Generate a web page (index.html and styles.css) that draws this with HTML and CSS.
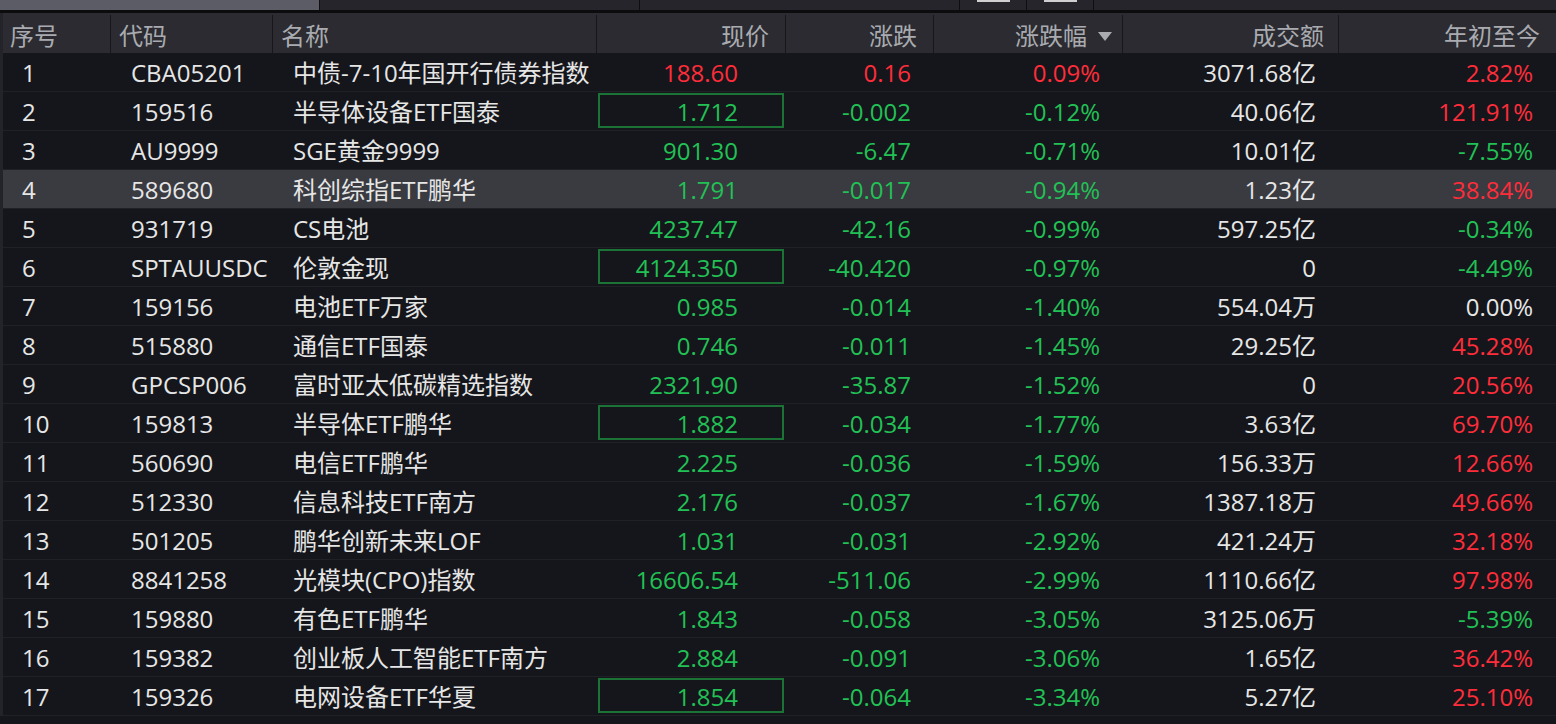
FILE: index.html
```html
<!DOCTYPE html>
<html lang="zh-CN">
<head>
<meta charset="utf-8">
<title>行情列表</title>
<link rel="stylesheet" href="styles.css">
</head>
<body>
<div class="tabbar">
  <div class="tab tab-active"></div>
  <div class="tab tab-w320"></div>
  <div class="tab tab-w320"></div>
  <div class="tab tab-icon"><span class="icon-bar"></span></div>
  <div class="tab tab-icon"><span class="icon-bar"></span></div>
  <div class="tab tab-rest"></div>
</div>
<div class="band"></div>
<div class="table">
  <div class="row head">
    <div class="c c1">序号</div>
    <div class="c c2">代码</div>
    <div class="c c3">名称</div>
    <div class="c c4">现价</div>
    <div class="c c5">涨跌</div>
    <div class="c c6">涨跌幅<span class="sort"></span></div>
    <div class="c c7">成交额</div>
    <div class="c c8">年初至今</div>
  </div>

  <div class="row"><div class="c c1">1</div><div class="c c2">CBA05201</div><div class="c c3">中债-7-10年国开行债券指数</div><div class="c c4 up">188.60</div><div class="c c5 up">0.16</div><div class="c c6 up">0.09%</div><div class="c c7">3071.68亿</div><div class="c c8 up">2.82%</div></div>
  <div class="row"><div class="c c1">2</div><div class="c c2">159516</div><div class="c c3">半导体设备ETF国泰</div><div class="c c4 dn boxed">1.712</div><div class="c c5 dn">-0.002</div><div class="c c6 dn">-0.12%</div><div class="c c7">40.06亿</div><div class="c c8 up">121.91%</div></div>
  <div class="row"><div class="c c1">3</div><div class="c c2">AU9999</div><div class="c c3">SGE黄金9999</div><div class="c c4 dn">901.30</div><div class="c c5 dn">-6.47</div><div class="c c6 dn">-0.71%</div><div class="c c7">10.01亿</div><div class="c c8 dn">-7.55%</div></div>
  <div class="row selected"><div class="c c1">4</div><div class="c c2">589680</div><div class="c c3">科创综指ETF鹏华</div><div class="c c4 dn">1.791</div><div class="c c5 dn">-0.017</div><div class="c c6 dn">-0.94%</div><div class="c c7">1.23亿</div><div class="c c8 up">38.84%</div></div>
  <div class="row"><div class="c c1">5</div><div class="c c2">931719</div><div class="c c3">CS电池</div><div class="c c4 dn">4237.47</div><div class="c c5 dn">-42.16</div><div class="c c6 dn">-0.99%</div><div class="c c7">597.25亿</div><div class="c c8 dn">-0.34%</div></div>
  <div class="row"><div class="c c1">6</div><div class="c c2">SPTAUUSDC</div><div class="c c3">伦敦金现</div><div class="c c4 dn boxed">4124.350</div><div class="c c5 dn">-40.420</div><div class="c c6 dn">-0.97%</div><div class="c c7">0</div><div class="c c8 dn">-4.49%</div></div>
  <div class="row"><div class="c c1">7</div><div class="c c2">159156</div><div class="c c3">电池ETF万家</div><div class="c c4 dn">0.985</div><div class="c c5 dn">-0.014</div><div class="c c6 dn">-1.40%</div><div class="c c7">554.04万</div><div class="c c8">0.00%</div></div>
  <div class="row"><div class="c c1">8</div><div class="c c2">515880</div><div class="c c3">通信ETF国泰</div><div class="c c4 dn">0.746</div><div class="c c5 dn">-0.011</div><div class="c c6 dn">-1.45%</div><div class="c c7">29.25亿</div><div class="c c8 up">45.28%</div></div>
  <div class="row"><div class="c c1">9</div><div class="c c2">GPCSP006</div><div class="c c3">富时亚太低碳精选指数</div><div class="c c4 dn">2321.90</div><div class="c c5 dn">-35.87</div><div class="c c6 dn">-1.52%</div><div class="c c7">0</div><div class="c c8 up">20.56%</div></div>
  <div class="row"><div class="c c1">10</div><div class="c c2">159813</div><div class="c c3">半导体ETF鹏华</div><div class="c c4 dn boxed">1.882</div><div class="c c5 dn">-0.034</div><div class="c c6 dn">-1.77%</div><div class="c c7">3.63亿</div><div class="c c8 up">69.70%</div></div>
  <div class="row"><div class="c c1">11</div><div class="c c2">560690</div><div class="c c3">电信ETF鹏华</div><div class="c c4 dn">2.225</div><div class="c c5 dn">-0.036</div><div class="c c6 dn">-1.59%</div><div class="c c7">156.33万</div><div class="c c8 up">12.66%</div></div>
  <div class="row"><div class="c c1">12</div><div class="c c2">512330</div><div class="c c3">信息科技ETF南方</div><div class="c c4 dn">2.176</div><div class="c c5 dn">-0.037</div><div class="c c6 dn">-1.67%</div><div class="c c7">1387.18万</div><div class="c c8 up">49.66%</div></div>
  <div class="row"><div class="c c1">13</div><div class="c c2">501205</div><div class="c c3">鹏华创新未来LOF</div><div class="c c4 dn">1.031</div><div class="c c5 dn">-0.031</div><div class="c c6 dn">-2.92%</div><div class="c c7">421.24万</div><div class="c c8 up">32.18%</div></div>
  <div class="row"><div class="c c1">14</div><div class="c c2">8841258</div><div class="c c3">光模块(CPO)指数</div><div class="c c4 dn">16606.54</div><div class="c c5 dn">-511.06</div><div class="c c6 dn">-2.99%</div><div class="c c7">1110.66亿</div><div class="c c8 up">97.98%</div></div>
  <div class="row"><div class="c c1">15</div><div class="c c2">159880</div><div class="c c3">有色ETF鹏华</div><div class="c c4 dn">1.843</div><div class="c c5 dn">-0.058</div><div class="c c6 dn">-3.05%</div><div class="c c7">3125.06万</div><div class="c c8 dn">-5.39%</div></div>
  <div class="row"><div class="c c1">16</div><div class="c c2">159382</div><div class="c c3">创业板人工智能ETF南方</div><div class="c c4 dn">2.884</div><div class="c c5 dn">-0.091</div><div class="c c6 dn">-3.06%</div><div class="c c7">1.65亿</div><div class="c c8 up">36.42%</div></div>
  <div class="row"><div class="c c1">17</div><div class="c c2">159326</div><div class="c c3">电网设备ETF华夏</div><div class="c c4 dn boxed">1.854</div><div class="c c5 dn">-0.064</div><div class="c c6 dn">-3.34%</div><div class="c c7">5.27亿</div><div class="c c8 up">25.10%</div></div>
</div>
</body>
</html>
```

FILE: styles.css
```css
html, body {
  margin: 0;
  padding: 0;
  background: #15161b;
  overflow: hidden;
}

body {
  width: 1556px;
  height: 724px;
  font-family: "Open Sans", "Noto Sans CJK SC", sans-serif;
  font-size: 24px;
  color: #e6e6e6;
}

/* top tab strip */
.tabbar {
  display: flex;
  height: 10px;
  background: #25252b;
}
.tab {
  height: 10px;
  box-sizing: border-box;
  border-right: 1px solid #0f0f12;
  flex-shrink: 0;
}
.tab-active {
  width: 320px;
  background: #5c5c67;
}
.tab-w320 { width: 320px; }
.tab-icon {
  width: 67px;
  display: flex;
  justify-content: center;
}
.icon-bar {
  display: block;
  width: 33px;
  height: 2px;
  background: #cfcfd2;
}
.tab-rest { flex: 1; border-right: none; }

.band {
  height: 3px;
  background: #0c0c0f;
}

/* table */
.table {
  border-left: 3px solid #23242a;
}
.row {
  display: grid;
  grid-template-columns: 108px 162px 324px 189px 148px 189px 216px 217px;
  height: 38px;
  line-height: 40px;
  border-bottom: 1px solid #202127;
  background: #15161b;
}
.row.selected {
  background: #3a3a41;
}
.row.head {
  height: 40px;
  border-bottom: none;
  background: #2b2b31;
  color: #a9abb0;
}
.head .c {
  border-right: 1px solid #17171b;
  box-sizing: border-box;
  height: 38px;
  line-height: 42px;
  margin-top: 2px;
}
.head .c8 { border-right: none; }

.c {
  white-space: nowrap;
  overflow: hidden;
  position: relative;
  height: 38px;
}
.c1 { padding-left: 19px; }
.c2 { padding-left: 20px; }
.c3 { padding-left: 20px; }
.c4 { text-align: right; padding-right: 48px; }
.c5, .c6, .c7, .c8 { text-align: right; padding-right: 23px; }

.head .c1 { padding-left: 7px; }
.head .c2 { padding-left: 8px; }
.head .c3 { padding-left: 8px; }
.head .c4 { padding-right: 16px; }
.head .c5 { padding-right: 16px; }
.head .c6 { padding-right: 10px; }
.head .c7 { padding-right: 14px; }
.head .c8 { padding-right: 16px; }

.sort {
  display: inline-block;
  width: 0;
  height: 0;
  margin-left: 11px;
  vertical-align: 4px;
  border-left: 7px solid transparent;
  border-right: 7px solid transparent;
  border-top: 9px solid #a9abb0;
}

.up { color: #ff2d3a; }
.dn { color: #22c155; }

.boxed::before {
  content: "";
  position: absolute;
  left: 1px;
  right: 2px;
  top: 1px;
  bottom: 2px;
  border: 2px solid #1b7435;
}
```
